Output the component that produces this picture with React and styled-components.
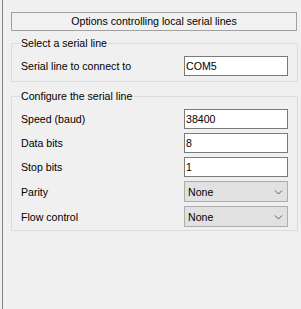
import React from "react";
import styled, { createGlobalStyle } from "styled-components";

const Global = createGlobalStyle`
  html, body { margin: 0; padding: 0; background: #f0f0f0; }
  body {
    font-family: "Liberation Sans", Arial, sans-serif;
    font-size: 10.6px;
    color: #000;
  }
`;

const Page = styled.div`
  width: 301px;
  height: 309px;
  box-sizing: border-box;
  padding-left: 2px;
  display: flex;
`;

const Panel = styled.div`
  flex: 1;
  border-left: 1px solid #838383;
  padding: 12px 3px 0 8px;
  display: flex;
  flex-direction: column;
`;

const TitleButton = styled.div`
  height: 19px;
  box-sizing: border-box;
  margin-right: 1px;
  border: 1px solid #a0a0a0;
  background: #f1f1f1;
  display: flex;
  align-items: center;
  justify-content: center;
  line-height: 1;
`;

const Group = styled.fieldset`
  margin: ${(p) => p.$top}px 0 0 0;
  padding: 0 9px ${(p) => p.$bottom}px 8px;
  border: 1px solid #dcdcdc;
  border-radius: 1px;
  min-width: 0;
`;

const Legend = styled.legend`
  padding: 0 1px;
  margin-left: 0;
  line-height: 13px;
`;

const Rows = styled.div`
  display: grid;
  grid-template-columns: 1fr 104px;
  row-gap: 4px;
  margin-top: ${(p) => p.$top}px;
  align-items: center;
`;

const Label = styled.span`
  padding-left: 1px;
`;

const TextBox = styled.input`
  box-sizing: border-box;
  width: 104px;
  height: 20px;
  margin: 0;
  border: 1px solid #7a7a7a;
  background: #fff;
  padding: 0 0 0 1px;
  font: inherit;
  color: #000;
  outline: none;
`;

const Combo = styled.div`
  box-sizing: border-box;
  width: 104px;
  height: 21px;
  border: 1px solid #adadad;
  background: #e1e1e1;
  display: flex;
  align-items: center;
  justify-content: space-between;
  padding: 0 4px 0 3px;
`;

const Chevron = () => (
  <svg width="9" height="6" viewBox="0 0 9 6">
    <path d="M1 1.5 L4.5 5 L8 1.5" fill="none" stroke="#606060" strokeWidth="1" />
  </svg>
);

export default function App() {
  return (
    <>
      <Global />
      <Page>
        <Panel>
          <TitleButton>Options controlling local serial lines</TitleButton>
          <Group $top={6} $bottom={5}>
            <Legend>Select a serial line</Legend>
            <Rows $top={6}>
              <Label>Serial line to connect to</Label>
              <TextBox defaultValue="COM5" readOnly />
            </Rows>
          </Group>
          <Group $top={8} $bottom={3}>
            <Legend>Configure the serial line</Legend>
            <Rows $top={6}>
              <Label>Speed (baud)</Label>
              <TextBox defaultValue="38400" readOnly />
              <Label>Data bits</Label>
              <TextBox defaultValue="8" readOnly />
              <Label>Stop bits</Label>
              <TextBox defaultValue="1" readOnly />
              <Label>Parity</Label>
              <Combo>
                <span>None</span>
                <Chevron />
              </Combo>
              <Label>Flow control</Label>
              <Combo>
                <span>None</span>
                <Chevron />
              </Combo>
            </Rows>
          </Group>
        </Panel>
      </Page>
    </>
  );
}
